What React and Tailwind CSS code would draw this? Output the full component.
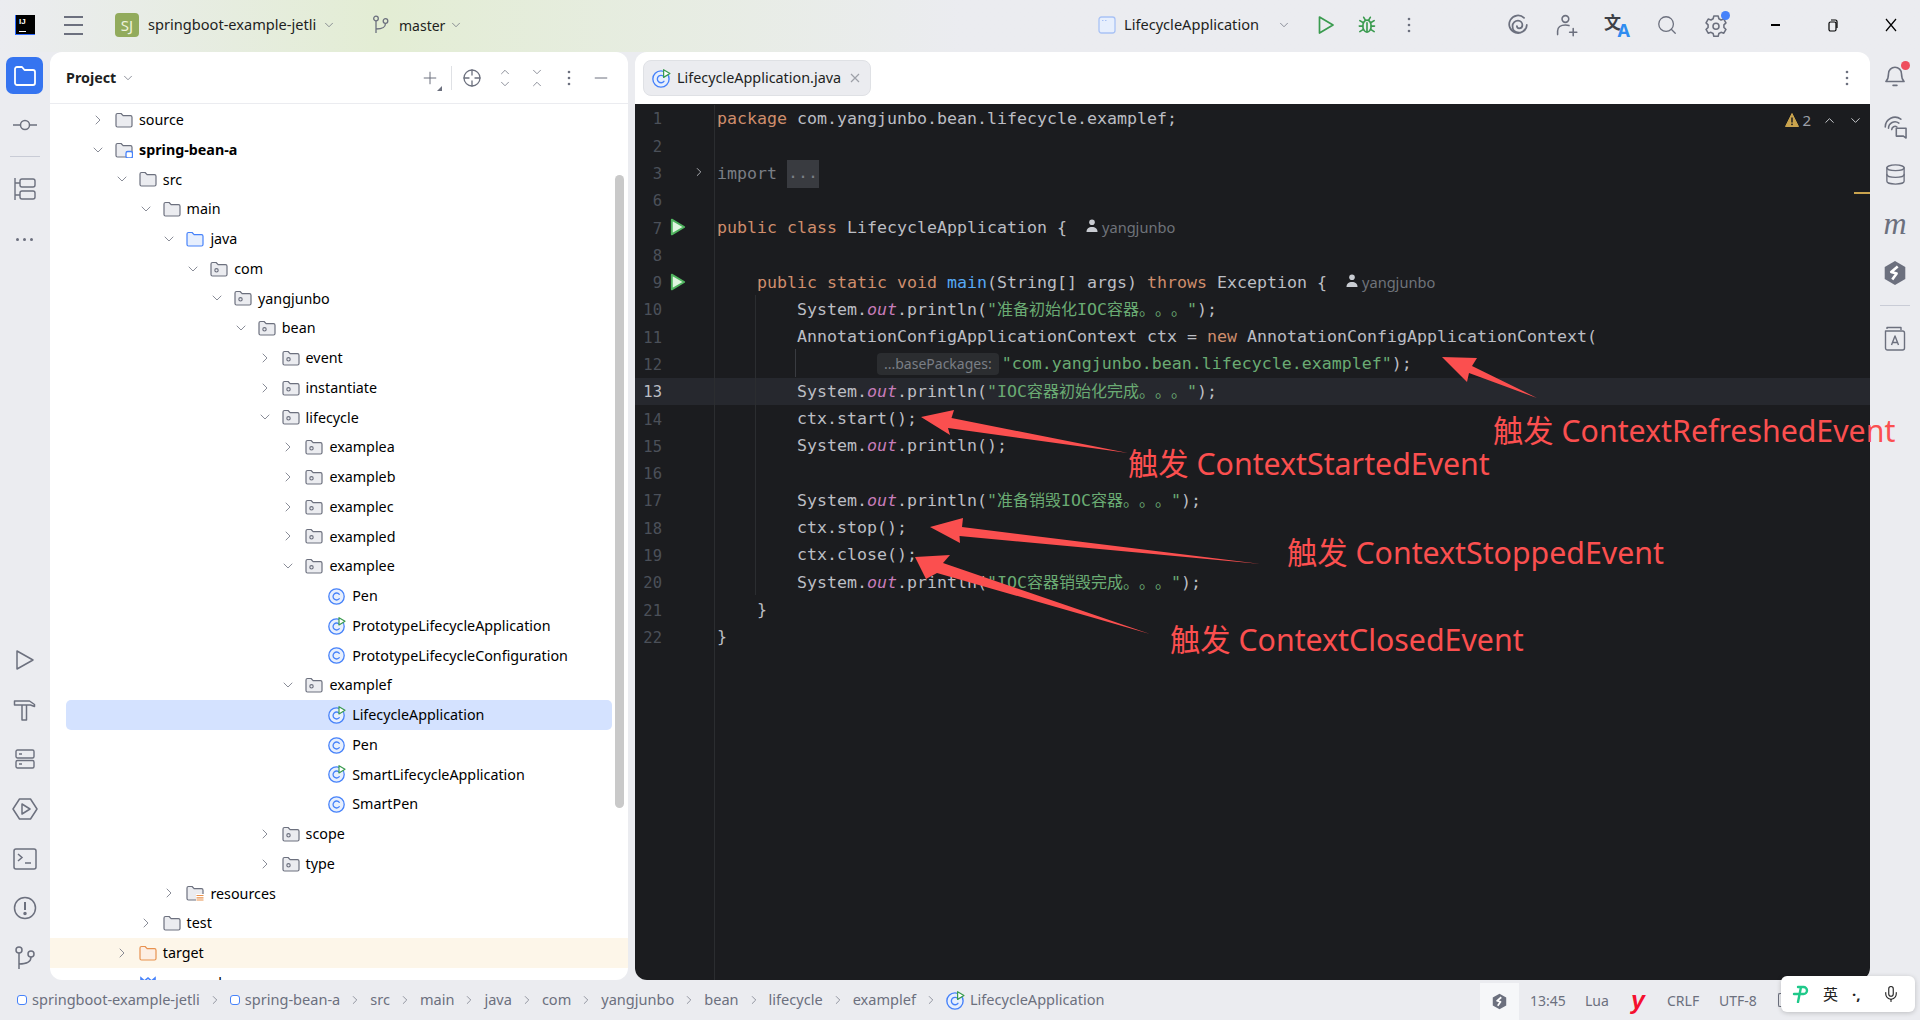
import React from "react";
import { ChevronRight, ChevronDown, ChevronUp, Plus, Minus, Search, Mic, Database } from "lucide-react";

const sans = "font-['Noto_Sans','Noto_Sans_CJK_SC',sans-serif]";

// small svg wrapper, strokes in the gray of the new UI theme
function Ico({ size = 20, stroke = "#6c707e", sw = 1.3, children, className = "" }) {
  return (
    <svg width={size} height={size} viewBox="0 0 20 20" fill="none" stroke={stroke} strokeWidth={sw} strokeLinecap="round" strokeLinejoin="round" className={className}>
      {children}
    </svg>
  );
}

function Folder({ kind }) {
  let stroke = "#6c707e";
  let fill = "#ebecf0";
  if (kind === "src") { stroke = "#4682fa"; fill = "#e7effd"; }
  if (kind === "target") { stroke = "#e8924f"; fill = "#fdeee3"; }
  return (
    <svg width="18" height="16" viewBox="0 0 18 16" className="shrink-0">
      <path d="M1 3a1.500 1.500 0 0 1 1.500-1.500h3.600l2 2.200h7.400A1.500 1.500 0 0 1 17 5.200v8.300a1.500 1.500 0 0 1-1.500 1.500h-13A1.500 1.500 0 0 1 1 13.500z" fill={fill} stroke={stroke} strokeWidth="1.200" strokeLinejoin="round" />
      {kind === "pkg" && <circle cx="6.500" cy="9.300" r="1.700" fill="none" stroke={stroke} strokeWidth="1.100" />}
      {kind === "module" && <rect x="11" y="9.500" width="6.500" height="6.500" rx="1.800" fill="#fff" stroke="#4682fa" strokeWidth="1.300" />}
      {kind === "res" && (
        <g stroke="#e8924f" strokeWidth="1.200">
          <rect x="10" y="9" width="8" height="7" fill="#fff" stroke="none" />
          <path d="M10.500 10.500h7M10.500 12.800h7M10.500 15h7" />
        </g>
      )}
    </svg>
  );
}

function ClassIcon({ run, size = 18 }) {
  return (
    <svg width={size} height={size} viewBox="0 0 18 18" className="shrink-0">
      <circle cx="8.500" cy="9.500" r="7.700" fill="#e7effd" stroke="#4682fa" strokeWidth="1.300" />
      <path d="M11.300 7.300a3.500 3.500 0 1 0 0 4.400" fill="none" stroke="#4682fa" strokeWidth="1.300" strokeLinecap="round" />
      {run && <path d="M11 0.700l6 3.600-6 3.600z" fill="#fff" stroke="#3a9b4f" strokeWidth="1.200" strokeLinejoin="round" />}
    </svg>
  );
}

function TreeRow({ depth, label, open, folder, cls, run, selected, bold, target, chev = true }) {
  const left = 40 + depth * 23.8 - (selected ? 16 : 0);
  return (
    <div
      style={{ paddingLeft: left }}
      className={`flex items-center h-[29.75px] shrink-0 text-[14.3px] text-black ${selected ? "mx-4 bg-[#d4e2ff] rounded-[5px]" : ""} ${target ? "bg-[#fdf6e9] text-[#7a4a12]" : ""}`}
    >
      <span className="w-[16px] shrink-0 flex justify-center text-[#6c707e]">
        {chev && (open ? <ChevronDown size={16} strokeWidth={1.2} /> : <ChevronRight size={16} strokeWidth={1.2} />)}
      </span>
      <span className={`w-[24px] shrink-0 flex ${cls ? "ml-[8px]" : "ml-[9px]"}`}>
        {folder && <Folder kind={folder} />}
        {cls && <ClassIcon run={run} />}
      </span>
      <span className={`whitespace-nowrap ${bold ? "font-bold" : ""}`}>{label}</span>
    </div>
  );
}

const rows = [
  { depth: 0, label: "source", folder: "plain" },
  { depth: 0, label: "spring-bean-a", folder: "module", open: true, bold: true },
  { depth: 1, label: "src", folder: "plain", open: true },
  { depth: 2, label: "main", folder: "plain", open: true },
  { depth: 3, label: "java", folder: "src", open: true },
  { depth: 4, label: "com", folder: "pkg", open: true },
  { depth: 5, label: "yangjunbo", folder: "pkg", open: true },
  { depth: 6, label: "bean", folder: "pkg", open: true },
  { depth: 7, label: "event", folder: "pkg" },
  { depth: 7, label: "instantiate", folder: "pkg" },
  { depth: 7, label: "lifecycle", folder: "pkg", open: true },
  { depth: 8, label: "examplea", folder: "pkg" },
  { depth: 8, label: "exampleb", folder: "pkg" },
  { depth: 8, label: "examplec", folder: "pkg" },
  { depth: 8, label: "exampled", folder: "pkg" },
  { depth: 8, label: "examplee", folder: "pkg", open: true },
  { depth: 9, label: "Pen", cls: true, chev: false },
  { depth: 9, label: "PrototypeLifecycleApplication", cls: true, run: true, chev: false },
  { depth: 9, label: "PrototypeLifecycleConfiguration", cls: true, chev: false },
  { depth: 8, label: "examplef", folder: "pkg", open: true },
  { depth: 9, label: "LifecycleApplication", cls: true, run: true, chev: false, selected: true },
  { depth: 9, label: "Pen", cls: true, chev: false },
  { depth: 9, label: "SmartLifecycleApplication", cls: true, run: true, chev: false },
  { depth: 9, label: "SmartPen", cls: true, chev: false },
  { depth: 7, label: "scope", folder: "pkg" },
  { depth: 7, label: "type", folder: "pkg" },
  { depth: 3, label: "resources", folder: "res" },
  { depth: 2, label: "test", folder: "plain" },
  { depth: 1, label: "target", folder: "target", target: true },
];

const K = ({ children }) => <span className="text-[#cf8e6d]">{children}</span>;
const S = ({ children }) => <span className="text-[#6aab73]">{children}</span>;
const O = () => <span className="text-[#c77dbb] italic">out</span>;
// the CJK glyphs run a little narrower than the mono cell size
const Z = ({ children }) => <span className="text-[16px]">{children}</span>;

function RunMark() {
  return (
    <svg width="16" height="18" viewBox="0 0 14 16" className="absolute left-[35px] top-[4px]">
      <path d="M1.500 1.500L12.500 8 1.500 14.500z" fill="#dff5e0" stroke="#4fb35e" strokeWidth="1.700" strokeLinejoin="round" />
    </svg>
  );
}

function Author() {
  return (
    <span className={`inline-flex items-center ml-[19px] ${sans} text-[14.6px] text-[#6f737a]`}>
      <svg width="12" height="14" viewBox="0 0 12 14" className="mr-[4px] -mt-[4px]">
        <circle cx="6" cy="3.300" r="2.800" fill="#c9ccd2" />
        <path d="M0.500 13c0-3.500 2.200-5 5.500-5s5.500 1.500 5.500 5z" fill="#c9ccd2" />
      </svg>
      yangjunbo
    </span>
  );
}

const code = [
  { n: 1, c: <><K>package</K> com.yangjunbo.bean.lifecycle.examplef;</> },
  { n: 2 },
  { n: 3, fold: true, c: <><span className="text-[#7a7e85]">import </span><span className="inline-flex items-center h-[28px] bg-[#393b40] text-[#7a7e85] px-[1px]">...</span></> },
  { n: 6 },
  { n: 7, run: true, c: <><K>public class</K> LifecycleApplication {"{"}<Author /></> },
  { n: 8 },
  { n: 9, run: true, c: <>{"    "}<K>public static void</K> <span className="text-[#56a8f5]">main</span>(String[] args) <K>throws</K> Exception {"{"}<Author /></> },
  { n: 10, c: <>{"        "}System.<O />.println(<S>"<Z>准备初始化</Z>IOC<Z>容器。。。</Z>"</S>);</> },
  { n: 11, c: <>{"        "}AnnotationConfigApplicationContext ctx = <K>new</K> AnnotationConfigApplicationContext(</> },
  { n: 12, c: <>{"                "}<span className={`inline-flex items-center h-[22px] px-[7px] rounded-[4px] bg-[#2b2d30] text-[#7a7e85] text-[14px] mr-[3px] ${sans}`}>...basePackages:</span><S>"com.yangjunbo.bean.lifecycle.examplef"</S>);</> },
  { n: 13, cur: true, c: <>{"        "}System.<O />.println(<S>"IOC<Z>容器初始化完成。。。</Z>"</S>);</> },
  { n: 14, c: <>{"        "}ctx.start();</> },
  { n: 15, c: <>{"        "}System.<O />.println();</> },
  { n: 16 },
  { n: 17, c: <>{"        "}System.<O />.println(<S>"<Z>准备销毁</Z>IOC<Z>容器。。。</Z>"</S>);</> },
  { n: 18, c: <>{"        "}ctx.stop();</> },
  { n: 19, c: <>{"        "}ctx.close();</> },
  { n: 20, c: <>{"        "}System.<O />.println(<S>"IOC<Z>容器销毁完成。。。</Z>"</S>);</> },
  { n: 21, c: <>{"    }"}</> },
  { n: 22, c: <>{"}"}</> },
];

function CodeLine({ line }) {
  return (
    <div className={`relative flex h-[27.3px] shrink-0 items-center ${line.cur ? "bg-[#26282e]" : ""}`}>
      <div className="relative flex h-full w-[80px] shrink-0 items-center border-r border-[#2b2d30]">
        <span className={`w-[27px] pt-[3px] text-right text-[15.5px] ${line.cur ? "text-[#bcbec4]" : "text-[#4b5059]"}`}>{line.n}</span>
        {line.run && <RunMark />}
        {line.fold && <ChevronRight size={14} strokeWidth={1.5} className="absolute left-[57px] top-[6px] text-[#bcbec4]" />}
      </div>
      <div className="pl-[2px] pt-[1.500px] whitespace-pre text-[#bcbec4]">{line.c}</div>
    </div>
  );
}

function Hexa({ size = 24 }) {
  return (
    <svg width={size} height={size} viewBox="0 0 24 24">
      <path d="M12 1l9.500 5.500v11L12 23l-9.500-5.500v-11z" fill="#6c707e" />
      <path d="M14.500 6l-6 5 5 1.500-4 5.500" fill="none" stroke="#fff" strokeWidth="2.400" strokeLinejoin="round" />
    </svg>
  );
}

// fixed width slot so the header icons sit where they should
const Slot = ({ ml, children }) => <span className={`w-[24px] h-[24px] flex items-center justify-center shrink-0 ${ml}`}>{children}</span>;

function Dots({ color = "#6c707e" }) {
  return (
    <svg width="4" height="16" viewBox="0 0 4 16" fill={color}>
      <circle cx="2" cy="2" r="1.300" />
      <circle cx="2" cy="8" r="1.300" />
      <circle cx="2" cy="14" r="1.300" />
    </svg>
  );
}

function Header() {
  return (
    <div className={`flex h-[52px] shrink-0 items-center bg-gradient-to-r from-[#ebecf0] via-[#e3edd4] via-20% to-[#ebecf0] to-50% pb-[2px] ${sans}`}>
      <div className="ml-[15px] flex h-[20px] w-[20px] flex-col justify-between border-l border-b border-[#2f6bff] bg-black px-[3px] py-[2px]">
        <span className="font-['Liberation_Sans',sans-serif] text-[8px] font-bold leading-[9px] text-white">IJ</span>
        <span className="h-[1.5px] w-[7px] bg-white" />
      </div>
      <div className="ml-[29px] flex h-[19px] w-[19px] flex-col justify-between">
        <span className="h-[2px] bg-[#6c707e]" />
        <span className="h-[2px] bg-[#6c707e]" />
        <span className="h-[2px] bg-[#6c707e]" />
      </div>
      <div className="ml-[32px] flex h-[24px] w-[24px] items-center justify-center rounded-[4px] bg-[#92ab5c] text-[15px] text-[#eef2dd]">SJ</div>
      <span className="ml-[9px] w-[167px] whitespace-nowrap text-[14.6px] text-[#1e1f22]">springboot-example-jetli</span>
      <ChevronDown size={14} strokeWidth={1.3} className="ml-[7px] text-[#6c707e]" />
      <svg width="18" height="20" viewBox="0 0 18 20" fill="none" stroke="#6c707e" strokeWidth="1.300" className="ml-[36px]">
        <circle cx="4" cy="3.500" r="2.300" />
        <circle cx="13.500" cy="6" r="2.300" />
        <path d="M4 6v12M4 14c6 0 9.500-1 9.500-5.700" />
      </svg>
      <span className="ml-[9px] w-[46px] text-[14px] text-[#1e1f22]">master</span>
      <ChevronDown size={14} strokeWidth={1.3} className="ml-[4px] text-[#6c707e]" />

      <div className="ml-auto flex items-center pr-[17px]">
        <Slot ml="">
          <svg width="18" height="18" viewBox="0 0 18 18">
            <rect x="1" y="1" width="16" height="16" rx="2.500" fill="#e7effd" stroke="#a9c2f5" strokeWidth="1.300" />
            <path d="M4 4.500h1.500M7 4.500h1.500" stroke="#a9c2f5" strokeWidth="1" />
          </svg>
        </Slot>
        <span className="ml-[5px] w-[135px] whitespace-nowrap text-[14.6px] text-[#1e1f22]">LifecycleApplication</span>
        <Slot ml="ml-[13px]"><ChevronDown size={14} strokeWidth={1.3} className="text-[#6c707e]" /></Slot>
        <Slot ml="ml-[18px]">
          <svg width="18" height="20" viewBox="0 0 18 20"><path d="M2.500 2L16 10 2.500 18z" fill="none" stroke="#3a9b4f" strokeWidth="1.700" strokeLinejoin="round" /></svg>
        </Slot>
        <Slot ml="ml-[17px]">
          <Ico stroke="#3a9b4f" sw="1.500" size={22}>
            <ellipse cx="10" cy="11" rx="3.800" ry="5.500" />
            <path d="M7 3l1.500 2.500M13 3l-1.500 2.500M6.200 11H3M16.800 11h-3.200M3.500 6l3.200 2M16.500 6l-3.200 2M3.500 16l3.200-2M16.500 16l-3.200-2M10 8v8" />
          </Ico>
        </Slot>
        <Slot ml="ml-[18px]"><Dots /></Slot>
        <Slot ml="ml-[85px]">
          <Ico size={22} sw="1.600">
            <path d="M15.500 3.500A8 8 0 1 0 18 10c0 4-3 7-7 7s-6-3-6-6 2.500-5 5-5 4 2 4 4-1.500 3-3 3-2-1-2-2" />
          </Ico>
        </Slot>
        <Slot ml="ml-[24px]">
          <Ico size={24}>
            <circle cx="9.500" cy="5" r="2.800" />
            <path d="M3 18v-3c0-3 2.500-5 6.500-5 1.300 0 2.200.2 3 .5M13 16h6M16 13v6" />
          </Ico>
        </Slot>
        <Slot ml="ml-[26px]">
          <span className="relative block h-[24px] w-[26px]">
            <span className="absolute left-0 top-0 text-[17px] font-bold leading-[20px] text-[#3c3f46]">文</span>
            <span className="absolute bottom-[-3px] right-[-2px] text-[18px] font-bold leading-[20px] text-[#2f8cf0]">A</span>
          </span>
        </Slot>
        <Slot ml="ml-[27px]"><Search size={22} strokeWidth={1.4} className="text-[#6c707e]" /></Slot>
        <Slot ml="ml-[25px]">
          <span className="relative block">
            <Ico size={24}>
              <path d="M8.200 2.500h3.600l.6 2.300 1.800 1 2.300-.7 1.800 3.100-1.700 1.700v2.100l1.700 1.700-1.800 3.100-2.300-.7-1.800 1-.6 2.400H8.200l-.6-2.400-1.800-1-2.300.7-1.800-3.100 1.700-1.700V9.900L1.700 8.200l1.800-3.100 2.300.7 1.800-1z" />
              <circle cx="10" cy="11" r="2.500" />
            </Ico>
            <span className="absolute -right-[2px] -top-[2px] h-[9px] w-[9px] rounded-full bg-[#4682fa]" />
          </span>
        </Slot>
        <Slot ml="ml-[35px]"><span className="h-[1.5px] w-[9px] bg-black" /></Slot>
        <Slot ml="ml-[34px]">
          <svg width="12" height="14" viewBox="0 0 12 14" fill="none" stroke="#000" strokeWidth="1.200"><rect x="2" y="4" width="7" height="9" rx="1.500" /><path d="M4 2h4.500A1.500 1.500 0 0 1 10 3.500V10" /></svg>
        </Slot>
        <Slot ml="ml-[34px]">
          <svg width="12" height="14" viewBox="0 0 12 14" stroke="#000" strokeWidth="1.200"><path d="M1 1l10 12M11 1L1 13" /></svg>
        </Slot>
      </div>
    </div>
  );
}

function LeftStrip() {
  const box = "flex h-[30px] items-center justify-center";
  return (
    <div className="flex w-[50px] shrink-0 flex-col items-center pr-[1px]">
      <div className="mt-[5px] flex h-[37px] w-[37px] items-center justify-center rounded-[7px] bg-[#3574f0]">
        <svg width="24" height="22" viewBox="0 0 24 22" fill="none" stroke="#fff" strokeWidth="1.800" strokeLinejoin="round">
          <path d="M2 4a2 2 0 0 1 2-2h5l2.500 3H20a2 2 0 0 1 2 2v11a2 2 0 0 1-2 2H4a2 2 0 0 1-2-2z" />
        </svg>
      </div>
      <div className={`${box} mt-[16px]`}>
        <svg width="26" height="14" viewBox="0 0 26 14" fill="none" stroke="#6c707e" strokeWidth="1.500"><circle cx="13" cy="7" r="4.500" /><path d="M1 7h7.500M17.500 7H25" /></svg>
      </div>
      <div className="mt-[16px] h-px w-[30px] bg-[#c9ccd6]" />
      <div className={`${box} mt-[17px]`}>
        <svg width="22" height="24" viewBox="0 0 22 24" fill="none" stroke="#6c707e" strokeWidth="1.400"><rect x="6" y="2" width="15" height="8" rx="2" /><rect x="6" y="14" width="15" height="8" rx="2" /><path d="M1 1v22M1 6h5M1 18h5" /></svg>
      </div>
      <div className={`${box} mt-[20px] gap-[4px]`}>
        <span className="h-[3px] w-[3px] rounded-full bg-[#6c707e]" />
        <span className="h-[3px] w-[3px] rounded-full bg-[#6c707e]" />
        <span className="h-[3px] w-[3px] rounded-full bg-[#6c707e]" />
      </div>

      <div className="mt-auto mb-[7px] flex flex-col gap-[19.7px]">
        <div className={box}><svg width="20" height="22" viewBox="0 0 20 22"><path d="M2 2l16 9-16 9z" fill="none" stroke="#6c707e" strokeWidth="1.500" strokeLinejoin="round" /></svg></div>
        <div className={box}><svg width="24" height="24" viewBox="0 0 24 24" fill="none" stroke="#6c707e" strokeWidth="1.500" strokeLinejoin="round"><path d="M1.500 6V3h15l5 3.500v2l-4-1.500H1.500zM9 7.500V22h4.500V7.500" /></svg></div>
        <div className={box}><svg width="20" height="20" viewBox="0 0 20 20" fill="none" stroke="#6c707e" strokeWidth="1.400"><rect x="1" y="1" width="18" height="8" rx="1.500" /><rect x="1" y="11.500" width="18" height="7.500" rx="1.500" /><path d="M4 5h3M4 15h3" /></svg></div>
        <div className={box}><svg width="26" height="26" viewBox="0 0 26 26" fill="none" stroke="#6c707e" strokeWidth="1.500" strokeLinejoin="round"><path d="M7.500 3h11L25 13l-6.500 10h-11L1 13z" /><path d="M10 8l8 5-8 5z" /></svg></div>
        <div className={box}><svg width="24" height="22" viewBox="0 0 24 22" fill="none" stroke="#6c707e" strokeWidth="1.500"><rect x="1" y="1" width="22" height="20" rx="2" /><path d="M5 6l4 3.500-4 3.500M12 15h6" /></svg></div>
        <div className={box}><svg width="24" height="24" viewBox="0 0 24 24" fill="none" stroke="#6c707e" strokeWidth="1.500"><circle cx="12" cy="12" r="10.500" /><path d="M12 6v8" strokeWidth="2" /><circle cx="12" cy="17.500" r="1" fill="#6c707e" /></svg></div>
        <div className={box}><svg width="22" height="24" viewBox="0 0 22 24" fill="none" stroke="#6c707e" strokeWidth="1.500"><circle cx="5" cy="4" r="3" /><circle cx="17" cy="8" r="3" /><path d="M5 7v16M5 18c7 0 12-2 12-7" /></svg></div>
      </div>
    </div>
  );
}

function ProjectPanel() {
  return (
    <div className={`relative flex h-full w-[578px] shrink-0 flex-col overflow-hidden rounded-[12px] bg-white ${sans}`}>
      <div className="flex h-[52px] shrink-0 items-center border-b border-[#ebecf0] pl-[16px]">
        <span className="w-[50px] text-[14.3px] font-bold text-[#1e1f22]">Project</span>
        <ChevronDown size={14} strokeWidth={1.3} className="ml-[5px] text-[#6c707e]" />
        <div className="ml-auto flex items-center pr-[17px] text-[#6c707e]">
          <span className="relative flex w-[20px] justify-center">
            <Plus size={22} strokeWidth={1.200} />
            <span className="absolute -bottom-[2px] right-[-2px] h-0 w-0 border-b-[5px] border-l-[5px] border-b-[#6c707e] border-l-transparent" />
          </span>
          <span className="ml-[11px] h-[24px] w-px bg-[#dfe1e5]" />
          <span className="ml-[10px]">
            <Ico size={20}><circle cx="10" cy="10" r="8" /><path d="M10 2v5M10 13v5M2 10h5M13 10h5" /></Ico>
          </span>
          <span className="ml-[16px] flex flex-col">
            <ChevronUp size={14} strokeWidth={1.300} className="-mb-[1px]" />
            <ChevronDown size={14} strokeWidth={1.300} className="-mt-[1px]" />
          </span>
          <span className="ml-[18px] flex flex-col">
            <ChevronDown size={14} strokeWidth={1.300} />
            <ChevronUp size={14} strokeWidth={1.300} className="-mt-[2px]" />
          </span>
          <span className="ml-[23px]"><Dots /></span>
          <Minus size={20} strokeWidth={1.200} className="ml-[20px]" />
        </div>
      </div>
      <div className="flex flex-col pt-[1px]">
        {rows.map((r, i) => <TreeRow key={i} {...r} />)}
        <div style={{ paddingLeft: 63.8 }} className="flex h-[29.75px] shrink-0 items-center text-[14.3px] text-black">
          <span className="w-[16px] shrink-0" />
          <span className="ml-[9px] w-[24px] shrink-0">
            <svg width="18" height="16" viewBox="0 0 18 16" fill="none" stroke="#4682fa" strokeWidth="1.600"><path d="M2 14V3l3.500 3L9 3l3.500 3L16 3v11" /></svg>
          </span>
          <span>pom.xml</span>
        </div>
      </div>
      <div className="absolute right-[4px] top-[123px] h-[633px] w-[9px] rounded-full bg-[#c9c9c9]" />
    </div>
  );
}

function EditorPanel() {
  return (
    <div className="flex h-full w-[1235px] shrink-0 flex-col overflow-hidden rounded-[12px] bg-white">
      <div className={`flex h-[52px] shrink-0 items-center pl-[8px] pr-[21px] ${sans}`}>
        <div className="flex h-[36px] w-[228px] items-center rounded-[8px] border border-[#dfe1e5] bg-[#ebecf0] pl-[8px]">
          <ClassIcon run size={19} />
          <span className="ml-[6px] w-[165px] whitespace-nowrap text-[14.4px] text-[#1e1f22]">LifecycleApplication.java</span>
          <svg width="10" height="10" viewBox="0 0 10 10" stroke="#9da0a8" strokeWidth="1.200" className="ml-[8px]"><path d="M1 1l8 8M9 1l-8 8" /></svg>
        </div>
        <span className="ml-auto"><Dots /></span>
      </div>
      <div className="relative min-h-0 flex-1 overflow-hidden bg-[#1b1c1f] pt-[0.8px] font-['DejaVu_Sans_Mono','Noto_Sans_CJK_SC',monospace] text-[16.62px] [text-spacing-trim:space-all]">
        {code.map((l) => <CodeLine key={l.n} line={l} />)}
        {/* rest of the gutter line under the last row */}
        <div className="absolute bottom-0 left-[79px] top-[546px] w-px bg-[#2b2d30]" />
        {/* indent guides */}
        <div className="absolute left-[120px] top-[191px] h-[300px] w-px bg-[#2b2d30]" />
        <div className="absolute left-[160px] top-[245px] h-[28px] w-px bg-[#393b40]" />
        {/* inspection widget */}
        <div className={`absolute right-[7px] top-[5px] flex items-center text-[#6c707e] ${sans}`}>
          <svg width="14" height="14" viewBox="0 0 14 14"><path d="M7 0.500L13.500 13.500H0.500z" fill="#c9a34e" stroke="#c9a34e" strokeLinejoin="round" /><path d="M7 4.500v5" stroke="#1b1c1f" strokeWidth="1.500" /><circle cx="7" cy="11.300" r="0.900" fill="#1b1c1f" /></svg>
          <span className="ml-[3px] text-[15px] text-[#9da0a8]">2</span>
          <ChevronUp size={15} strokeWidth={1.4} className="ml-[11px] text-[#dfe1e5]" />
          <ChevronDown size={15} strokeWidth={1.4} className="ml-[11px] text-[#dfe1e5]" />
        </div>
        <div className="absolute right-0 top-[88px] h-[2px] w-[16px] bg-[#c9a34e]" />
      </div>
    </div>
  );
}

function RightStrip() {
  const box = "flex h-[30px] items-center justify-center";
  return (
    <div className="flex w-[50px] shrink-0 flex-col items-center">
      <div className={`${box} relative mt-[8px]`}>
        <Ico size={26} sw="1.200">
          <path d="M3 15c1.500-1.500 2-3 2-6a5 5 0 0 1 10 0c0 3 .5 4.500 2 6zM8.500 18h3" />
        </Ico>
        <span className="absolute -right-[2px] top-[1px] h-[9px] w-[9px] rounded-full bg-[#ee4e5e]" />
      </div>
      <div className={`${box} mt-[22px]`}>
        <Ico size={26} sw="1.200">
          <path d="M2.500 10a7.500 7.500 0 0 1 12-6M5 11a5 5 0 0 1 8-4M7.500 12a2.500 2.500 0 0 1 4-2" />
          <path d="M11 11h7.500v7.500l-2-1.500H11z" />
        </Ico>
      </div>
      <div className={`${box} mt-[17px]`}><Database size={23} strokeWidth={1.400} className="text-[#6c707e]" /></div>
      <div className={`${box} mt-[19px] font-['Liberation_Serif',serif] text-[32px] italic leading-none text-[#6c707e]`}>m</div>
      <div className={`${box} mt-[20px]`}><Hexa size={26} /></div>
      <div className="mt-[17px] h-px w-[30px] bg-[#c9ccd6]" />
      <div className={`${box} mt-[16.500px]`}>
        <svg width="22" height="26" viewBox="0 0 22 26" fill="none" stroke="#6c707e" strokeWidth="1.400" strokeLinejoin="round">
          <path d="M3 4V2.500h14V5M1.500 6h17a2 2 0 0 1 2 2v15a2 2 0 0 1-2 2h-15a2 2 0 0 1-2-2zM7.500 20l3.500-9 3.500 9M8.500 17.500h5" />
        </svg>
      </div>
    </div>
  );
}

const crumbs = ["src", "main", "java", "com", "yangjunbo", "bean", "lifecycle", "examplef"];

function StatusBar() {
  const Sep = () => <ChevronRight size={14} strokeWidth={1.2} className="mx-[8px] text-[#6c707e]" />;
  const Mod = () => <span className="mr-[5px] h-[10px] w-[10px] rounded-[3px] border-[1.500px] border-[#4682fa] bg-white" />;
  return (
    <div className={`flex h-[40px] shrink-0 items-center pl-[17px] text-[14.55px] text-[#6c707e] ${sans}`}>
      <Mod />
      <span>springboot-example-jetli</span>
      <Sep />
      <Mod />
      <span>spring-bean-a</span>
      {crumbs.map((c) => (
        <React.Fragment key={c}>
          <Sep />
          <span>{c}</span>
        </React.Fragment>
      ))}
      <Sep />
      <ClassIcon run size={19} />
      <span className="ml-[5px]">LifecycleApplication</span>

      <div className="ml-auto flex h-full items-center pr-[136px] text-[14px]">
        <div className="flex h-[37px] w-[39px] items-center justify-center self-end bg-[#f6f7f9]"><Hexa size={17} /></div>
        <span className="ml-[11px] w-[34px] whitespace-nowrap">13:45</span>
        <span className="ml-[21px] w-[22px] whitespace-nowrap">Lua</span>
        <span className="ml-[24px] w-[13px] font-['Liberation_Sans',sans-serif] text-[25px] font-bold italic leading-none text-[#f5102f]">y</span>
        <span className="ml-[23px] w-[32px] whitespace-nowrap">CRLF</span>
        <span className="ml-[20px] w-[38px] whitespace-nowrap">UTF-8</span>
        <span className="ml-[21px] h-[14px] w-[6px] rounded-l-[2px] border border-r-0 border-[#6c707e]" />
      </div>
    </div>
  );
}

// the red notes someone painted over the screenshot
function Annotations() {
  const red = "#fb4f4f";
  const note = `absolute whitespace-nowrap text-[30.3px] leading-none text-[#fb4f4f] ${sans}`;
  return (
    <div className="pointer-events-none absolute inset-0">
      <svg width="1920" height="1020" viewBox="0 0 1920 1020" className="absolute left-0 top-0">
        <polygon fill={red} points="1442,357 1477,358 1472,366 1537,398 1469,373 1467,382" />
        <polygon fill={red} points="921,417 954,410 951.5,418 1128,453 948,428 950,435" />
        <polygon fill={red} points="930,527 963,518 962,527 1261,564 959.500,536 960,543" />
        <polygon fill={red} points="915,557 950,555 943,563 1150,634 937,573 926,579" />
      </svg>
      <span className={`${note} left-[1493px] top-[416px]`}>触发 ContextRefreshedEvent</span>
      <span className={`${note} left-[1128px] top-[449px]`}>触发 ContextStartedEvent</span>
      <span className={`${note} left-[1287px] top-[538px]`}>触发 ContextStoppedEvent</span>
      <span className={`${note} left-[1170px] top-[625px]`}>触发 ContextClosedEvent</span>
    </div>
  );
}

function ImePopup() {
  return (
    <div className={`absolute left-[1781px] top-[976px] flex h-[36px] w-[134px] items-center rounded-[6px] bg-white pl-[10px] text-[15px] text-[#222] shadow-[0_1px_5px_rgba(0,0,0,0.2)] ${sans}`}>
      <svg width="18" height="18" viewBox="0 0 18 18" fill="none" stroke="#1fc98a" strokeWidth="2.400" strokeLinecap="round"><path d="M7 17L10 2M3 9h9.500a3.500 3.500 0 0 0 0-7H7" /></svg>
      <span className="ml-[14px]">英</span>
      <span className="ml-[14px] font-bold">·,</span>
      <Mic size={18} strokeWidth={1.500} className="ml-[21px]" />
    </div>
  );
}

export default function App() {
  return (
    <div className="relative flex h-[1020px] w-[1920px] flex-col overflow-hidden bg-[#ebecf0]">
      <Header />
      <div className="flex min-h-0 flex-1">
        <LeftStrip />
        <ProjectPanel />
        <div className="w-[7px] shrink-0" />
        <EditorPanel />
        <RightStrip />
      </div>
      <StatusBar />
      <Annotations />
      <ImePopup />
    </div>
  );
}
